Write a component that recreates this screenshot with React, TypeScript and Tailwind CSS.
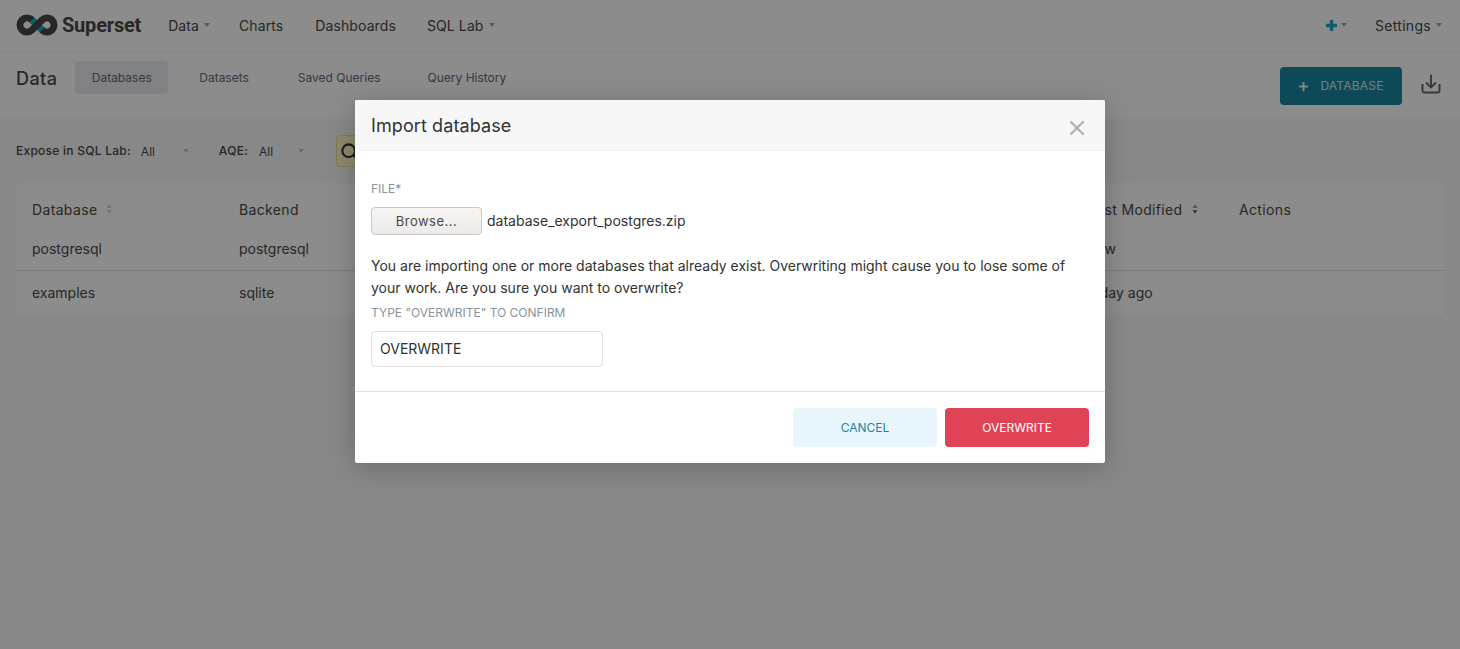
import { Plus, Search, X } from 'lucide-react';

function Caret({ className = '' }: { className?: string }) {
  return <span className={`inline-block w-0 h-0 border-x-[3.5px] border-x-transparent border-t-[4px] border-t-[#a8a8a8] ${className}`} />;
}

function SortIcon({ dark = false }: { dark?: boolean }) {
  return (
    <svg width="6" height="10" viewBox="0 0 6 10" className="ml-[9px]">
      <path d="M3 0.5 L5.5 3.8 H0.5 Z" fill={dark ? '#8a8a8a' : '#c8c8c8'} />
      <path d="M3 9.5 L5.5 6.2 H0.5 Z" fill={dark ? '#555555' : '#c8c8c8'} />
    </svg>
  );
}

function Logo() {
  return (
    <svg width="42" height="22" viewBox="0 0 42 22" fill="none" strokeWidth="7">
      <path d="M14.5 4.6 L27.5 17.4" stroke="#20a7c9" />
      <path d="M15.9 6 A7 7 0 1 0 15.9 16 L26.1 6 A7 7 0 1 1 26.1 16" stroke="#484848" />
    </svg>
  );
}

function DownloadIcon() {
  return (
    <svg width="20" height="20" viewBox="0 0 20 20" fill="none" stroke="#666666" strokeWidth="1.9" className="ml-[19px] mt-[7px]">
      <path d="M10 0.5 V13.5 M5 8.5 L10 13.5 L15 8.5" />
      <path d="M1.5 10 V17 Q1.5 18.5 3 18.5 H17 Q18.5 18.5 18.5 17 V10" />
    </svg>
  );
}

function NavItem({ label, caret = false, className = '' }: { label: string; caret?: boolean; className?: string }) {
  return (
    <div className={`flex items-center ${className}`}>
      <span>{label}</span>
      {caret && <Caret className="ml-[5px] -mr-[4px]" />}
    </div>
  );
}

const rows = [
  { name: 'postgresql', backend: 'postgresql', modified: 'now' },
  { name: 'examples', backend: 'sqlite', modified: 'a day ago' },
];

export default function App() {
  return (
    <div className="relative h-screen overflow-hidden bg-[#f7f7f7] text-[14px] text-[#484848] font-['Inter',sans-serif]">
      <header className="h-[53px] bg-white border-b border-[#f0f0f0] flex items-center pb-[2px] pl-[16px] pr-[22px]">
        <Logo />
        <span className="ml-[4px] font-['Roboto',sans-serif] font-bold text-[20px] tracking-[-0.2px] text-[#484848]">Superset</span>
        <nav className="ml-[26px] flex items-center gap-[32px] tracking-[0.1px]">
          <NavItem label="Data" caret className="ml-[1px]" />
          <NavItem label="Charts" className="ml-[1px]" />
          <NavItem label="Dashboards" />
          <NavItem label="SQL Lab" caret className="-ml-[1px]" />
        </nav>
        <div className="ml-auto flex items-center">
          <svg width="11" height="11" viewBox="0 0 11 11" fill="#20a7c9">
            <rect x="3.75" width="3.5" height="11" />
            <rect y="3.75" width="11" height="3.5" />
          </svg>
          <Caret className="ml-[4px]" />
          <NavItem label="Settings" caret className="ml-[28px] tracking-[0.3px]" />
        </div>
      </header>

      <div className="h-[66px] bg-white flex pl-[16px] pr-[19px] rounded-b-[4px]">
        <h1 className="mt-[14px] text-[18px] leading-[24px] font-medium tracking-[0.4px]">Data</h1>
        <div className="ml-[18px] mt-[8px] flex items-start text-[12px] text-[#666680]">
          <div className="h-[33px] w-[93px] rounded-[4px] bg-[#e8ecf0] flex items-center justify-center">Databases</div>
          <div className="h-[33px] ml-[31px] flex items-center">Datasets</div>
          <div className="h-[33px] ml-[49px] flex items-center">Saved Queries</div>
          <div className="h-[33px] ml-[47px] flex items-center">Query History</div>
        </div>
        <div className="ml-auto mt-[14px] flex items-start">
          <div className="h-[38px] w-[122px] pr-[1px] rounded-[4px] bg-[#1a85a0] flex items-center justify-center text-[12px] text-white/80 tracking-[0.2px]">
            <Plus size={13} strokeWidth={4} className="mr-[10px]" />
            DATABASE
          </div>
          <DownloadIcon />
        </div>
      </div>

      <div className="h-[64px] flex items-center pl-[16px] text-[12px]">
        <span className="font-medium tracking-[0.25px]">Expose in SQL Lab:</span>
        <span className="ml-[10px] mt-[2px] w-[42px]">All</span>
        <Caret className="border-t-[#c4c4c4]" />
        <span className="ml-[30px] font-medium tracking-[0.25px]">AQE:</span>
        <span className="ml-[11px] mt-[2px] w-[39px]">All</span>
        <Caret className="border-t-[#c4c4c4]" />
        <div className="ml-[32px] h-[32px] w-[70px] rounded-[4px] border border-[#e6dc9c] bg-[#fff9c4] flex items-center pl-[3px]">
          <Search size={19} strokeWidth={2.6} className="text-[#323232]" />
        </div>
      </div>

      <div className="mx-[16px] bg-white rounded-[4px]">
        <div className="h-[45px] flex items-center pt-[7px] px-[16px] font-normal tracking-[0.35px]">
          <div className="w-[207px] flex items-center">
            Database
            <SortIcon />
          </div>
          <div className="w-[849px]">Backend</div>
          <div className="w-[151px] flex items-center">
            Last Modified
            <SortIcon dark />
          </div>
          <div>Actions</div>
        </div>
        {rows.map((row, i) => (
          <div key={row.name} className={`flex items-center px-[16px] ${i === 0 ? 'h-[43px] pb-[1px] border-b border-[#e0e0e0]' : 'h-[44px] pb-[2px]'}`}>
            <div className="w-[207px]">{row.name}</div>
            <div className="w-[849px]">{row.backend}</div>
            <div className="w-[151px]">{row.modified}</div>
          </div>
        ))}
      </div>

      <div className="absolute inset-0 bg-black/45" />

      <div className="absolute left-[355px] top-[100px] w-[750px] h-[363px] rounded-[2px] bg-white text-[#323232] shadow-[0_4px_28px_rgba(0,0,0,0.22)]">
        <div className="h-[51px] bg-[#f7f7f7] border-b border-[#f0f0f0] rounded-t-[2px] flex items-center justify-between pl-[16px] pr-[16px]">
          <h2 className="mt-[2px] text-[18px] leading-[24px] tracking-[0.1px]">Import database</h2>
          <X size={24} strokeWidth={2.4} className="mt-[6px] text-[#b2b2c0]" />
        </div>
        <div className="h-[241px] border-b border-[#e0e0e0] px-[16px] pt-[30px]">
          <div className="text-[12px] leading-[16px] text-[#879399]">FILE*</div>
          <div className="mt-[10px] flex items-center">
            <div className="h-[28px] w-[111px] pt-[1px] rounded-[4px] border border-[#cdc7c2] bg-gradient-to-b from-[#f6f5f4] to-[#edebe9] flex items-center justify-center text-[13px] text-[#484848] tracking-[0.5px]">
              Browse...
            </div>
            <span className="ml-[5px] mb-[2px]">database_export_postgres.zip</span>
          </div>
          <p className="mt-[20px] leading-[22px] w-[700px]">
            You are importing one or more databases that already exist. Overwriting might cause you to lose some of your work. Are you sure you want to overwrite?
          </p>
          <div className="mt-[6px] text-[12px] leading-[16px] text-[#879399]">TYPE "OVERWRITE" TO CONFIRM</div>
          <div className="mt-[10px] h-[36px] w-[232px] pb-[2px] rounded-[4px] border border-[#e0e0e0] flex items-center pl-[8px]">
            OVERWRITE
          </div>
        </div>
        <div className="flex justify-end gap-[8px] pt-[16px] pr-[16px] text-[12px]">
          <div className="h-[39px] w-[144px] rounded-[4px] bg-[#e8f5fa] text-[#1a85a0] flex items-center justify-center">CANCEL</div>
          <div className="h-[39px] w-[144px] rounded-[4px] bg-[#e04355] text-white flex items-center justify-center">OVERWRITE</div>
        </div>
      </div>
    </div>
  );
}
